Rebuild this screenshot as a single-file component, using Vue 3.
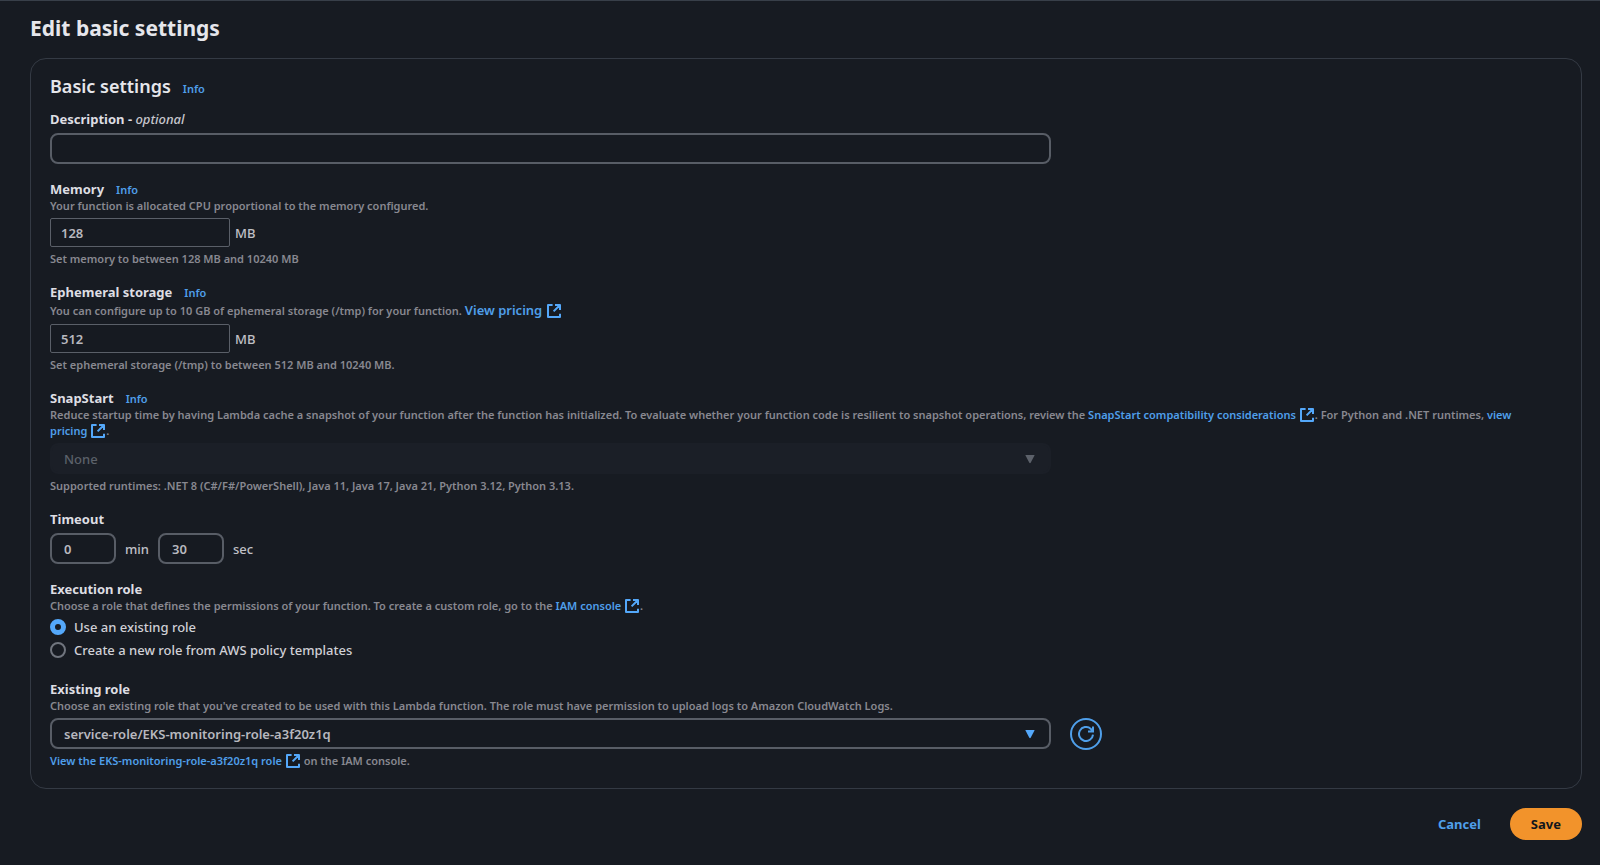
<script setup>
import { ref, h } from 'vue'

const description = ref('')
const memory = ref('128')
const storage = ref('512')
const minutes = ref('0')
const seconds = ref('30')
const roleMode = ref('existing')
const role = ref('service-role/EKS-monitoring-role-a3f20z1q')
const snapStart = ref('None')

const ExternalIcon = () =>
  h('svg', { viewBox: '0 0 14 14', width: 14, height: 14, class: 'ext-icon', 'aria-hidden': 'true' }, [
    h('path', {
      d: 'M5.6 1H1v12h12V9.8M8 1h5v5M13 1 6.6 7.4',
      fill: 'none',
      stroke: 'currentColor',
      'stroke-width': 2,
      'stroke-linejoin': 'round'
    })
  ])
</script>

<template>
  <main class="page">
    <h1>Edit basic settings</h1>
    <form class="form" @submit.prevent>
      <section class="card">
        <header class="card-head">
          <h2>Basic settings</h2>
          <a href="#" class="info">Info</a>
        </header>

        <div class="field">
          <label class="label" for="description">Description - <em>optional</em></label>
          <input id="description" v-model="description" class="box wide gap" type="text" />
        </div>

        <div class="field">
          <div class="label-row">
            <label class="label" for="memory">Memory</label>
            <a href="#" class="info">Info</a>
          </div>
          <p class="hint">Your function is allocated CPU proportional to the memory configured.</p>
          <div class="unit-row">
            <input id="memory" v-model="memory" class="plain" type="text" />
            <span class="unit">MB</span>
          </div>
          <p class="hint below">Set memory to between 128 MB and 10240 MB</p>
        </div>

        <div class="field">
          <div class="label-row">
            <label class="label" for="storage">Ephemeral storage</label>
            <a href="#" class="info">Info</a>
          </div>
          <p class="hint tall">
            You can configure up to 10 GB of ephemeral storage (/tmp) for your function.
            <a href="#" class="large">View pricing <ExternalIcon /></a>
          </p>
          <div class="unit-row">
            <input id="storage" v-model="storage" class="plain" type="text" />
            <span class="unit">MB</span>
          </div>
          <p class="hint below">Set ephemeral storage (/tmp) to between 512 MB and 10240 MB.</p>
        </div>

        <div class="field">
          <div class="label-row">
            <label class="label" for="snapstart">SnapStart</label>
            <a href="#" class="info">Info</a>
          </div>
          <p class="hint">
            Reduce startup time by having Lambda cache a snapshot of your function after the function has initialized. To evaluate whether your function code is resilient to snapshot operations, review the
            <a href="#">SnapStart compatibility considerations <ExternalIcon /></a>. For Python and .NET runtimes, <a href="#">view <span class="keep">pricing <ExternalIcon /></span></a>.
          </p>
          <div class="select wide disabled select-gap">
            <select id="snapstart" v-model="snapStart" class="box" disabled>
              <option>None</option>
            </select>
            <svg class="caret" viewBox="0 0 10 10" width="10" height="10" aria-hidden="true"><path d="M.8 1h8.4q.6 0 .3.6L5.8 8.6q-.8 1.4-1.6 0L.5 1.6Q.2 1 .8 1z" /></svg>
          </div>
          <p class="hint below">Supported runtimes: .NET 8 (C#/F#/PowerShell), Java 11, Java 17, Java 21, Python 3.12, Python 3.13.</p>
        </div>

        <div class="field" role="group" aria-labelledby="timeout-label">
          <span id="timeout-label" class="label">Timeout</span>
          <div class="time-row gap">
            <input id="minutes" v-model="minutes" class="box short" type="text" />
            <label for="minutes">min</label>
            <input id="seconds" v-model="seconds" class="box short" type="text" />
            <label for="seconds">sec</label>
          </div>
        </div>

        <div class="field" role="radiogroup" aria-labelledby="exec-label">
          <span id="exec-label" class="label">Execution role</span>
          <p class="hint">
            Choose a role that defines the permissions of your function. To create a custom role, go to the
            <a href="#">IAM console <ExternalIcon /></a>.
          </p>
          <div class="radios">
            <label class="radio"><input v-model="roleMode" type="radio" name="role" value="existing" />Use an existing role</label>
            <label class="radio"><input v-model="roleMode" type="radio" name="role" value="new" />Create a new role from AWS policy templates</label>
          </div>
        </div>

        <div class="field last">
          <label class="label" for="role">Existing role</label>
          <p class="hint">Choose an existing role that you've created to be used with this Lambda function. The role must have permission to upload logs to Amazon CloudWatch Logs.</p>
          <div class="role-row select-gap">
            <div class="select wide">
              <select id="role" v-model="role" class="box">
                <option>service-role/EKS-monitoring-role-a3f20z1q</option>
              </select>
              <svg class="caret" viewBox="0 0 10 10" width="10" height="10" aria-hidden="true"><path d="M.8 1h8.4q.6 0 .3.6L5.8 8.6q-.8 1.4-1.6 0L.5 1.6Q.2 1 .8 1z" /></svg>
            </div>
            <button type="button" class="refresh" aria-label="Refresh roles">
              <svg viewBox="0 0 16 16" width="16" height="16" aria-hidden="true">
                <path d="M15 8.6A7 7 0 1 1 12.6 2.7L14.6 5M15 .5v5H10" fill="none" stroke="currentColor" stroke-width="2" />
              </svg>
            </button>
          </div>
          <p class="hint below"><a href="#">View the EKS-monitoring-role-a3f20z1q role <ExternalIcon /></a> on the IAM console.</p>
        </div>
      </section>

      <footer class="actions">
        <button type="button" class="cancel">Cancel</button>
        <button type="submit" class="save">Save</button>
      </footer>
    </form>
  </main>
</template>

<style>
body {
  background: #171b22;
}
</style>

<style scoped>
.page {
  box-sizing: border-box;
  min-height: 100vh;
  padding: 11px 18px 24px 30px;
  border-top: 1px solid #383f49;
  background: #171b22;
  color: #c0c0c7;
  font-family: "Noto Sans", "Open Sans", sans-serif;
  font-size: 13px;
  font-weight: 500;
  line-height: 20px;
}
h1,
h2,
p {
  margin: 0;
}
h1 {
  color: #e6e6eb;
  font-size: 21px;
  font-weight: 700;
  line-height: 32px;
}
h2 {
  color: #e6e6eb;
  font-size: 18px;
  font-weight: 600;
  line-height: 24px;
}
.card {
  margin-top: 14px;
  padding: 15px 19px 19px;
  border: 1px solid #343a44;
  border-radius: 16px;
}
.card-head,
.label-row {
  display: flex;
  align-items: baseline;
  gap: 12px;
}
.card-head {
  margin-bottom: 12px;
}
a {
  color: #4f9fea;
  font-weight: 600;
  text-decoration: none;
}
.info {
  font-size: 11px;
  line-height: 16px;
}
.keep {
  white-space: nowrap;
}
.field {
  margin-bottom: 16px;
}
.label {
  display: block;
  color: #dedee3;
  font-weight: 700;
  line-height: 18px;
}
.label em {
  color: #c6c6cd;
  font-weight: 500;
}
.hint {
  max-width: 98%;
  color: #888890;
  font-size: 11px;
  font-weight: 600;
  line-height: 16px;
}
.below {
  margin-top: 4px;
}
.tall {
  line-height: 18px;
}
.large {
  font-size: 13px;
}
.ext-icon {
  margin: 0 1px;
  color: #54a8fa;
  vertical-align: -3px;
}
.box,
.plain {
  box-sizing: border-box;
  display: block;
  margin: 0;
  background: #161a21;
  color: #b8b8bf;
  font: inherit;
  font-weight: 600;
}
.box {
  height: 31px;
  padding: 0 12px;
  border: 2px solid #585d66;
  border-radius: 8px;
}
.plain {
  width: 180px;
  height: 29px;
  padding: 0 10px;
  border: 1px solid #5a5f68;
  border-radius: 2px;
}
.wide {
  width: 66.2%;
}
.gap {
  margin-top: 5px;
}
.select-gap {
  margin-top: 4px;
}
.unit-row {
  display: flex;
  align-items: center;
  gap: 5px;
  margin-top: 4px;
}
.select {
  position: relative;
}
.select .box {
  width: 100%;
  appearance: none;
  opacity: 1;
}
.disabled .box {
  border-color: #1b1f27;
  background: #1b1f27;
  color: #5c616a;
  font-weight: 500;
}
.caret {
  position: absolute;
  top: 11px;
  right: 16px;
  fill: #54a8fa;
  pointer-events: none;
}
.disabled .caret {
  fill: #5c616a;
}
.time-row {
  display: flex;
  align-items: center;
  gap: 9px;
}
.short {
  width: 66px;
}
.radios {
  display: grid;
  gap: 3px;
  margin: 3px 0 20px;
}
.radio {
  display: flex;
  align-items: center;
  gap: 8px;
  color: #d0d0d6;
}
.radio input {
  box-sizing: border-box;
  width: 16px;
  height: 16px;
  margin: 0;
  border: 2px solid #70757e;
  border-radius: 50%;
  appearance: none;
}
.radio input:checked {
  border: 5px solid #54a8fa;
}
.role-row {
  display: flex;
  align-items: center;
  gap: 19px;
  height: 31px;
}
button {
  border: 0;
  background: none;
  font: inherit;
  font-weight: 700;
}
.refresh {
  display: grid;
  place-items: center;
  width: 32px;
  height: 32px;
  padding: 0;
  border: 2px solid #4f9fea;
  border-radius: 50%;
  color: #4f9fea;
}
.last {
  margin-bottom: 0;
}
.actions {
  display: flex;
  justify-content: flex-end;
  gap: 8px;
  margin-top: 19px;
}
.cancel,
.save {
  height: 32px;
  padding: 0 21px;
  border-radius: 16px;
}
.cancel {
  color: #4f9fea;
}
.save {
  background: #f2932b;
  color: #12161c;
}
</style>
